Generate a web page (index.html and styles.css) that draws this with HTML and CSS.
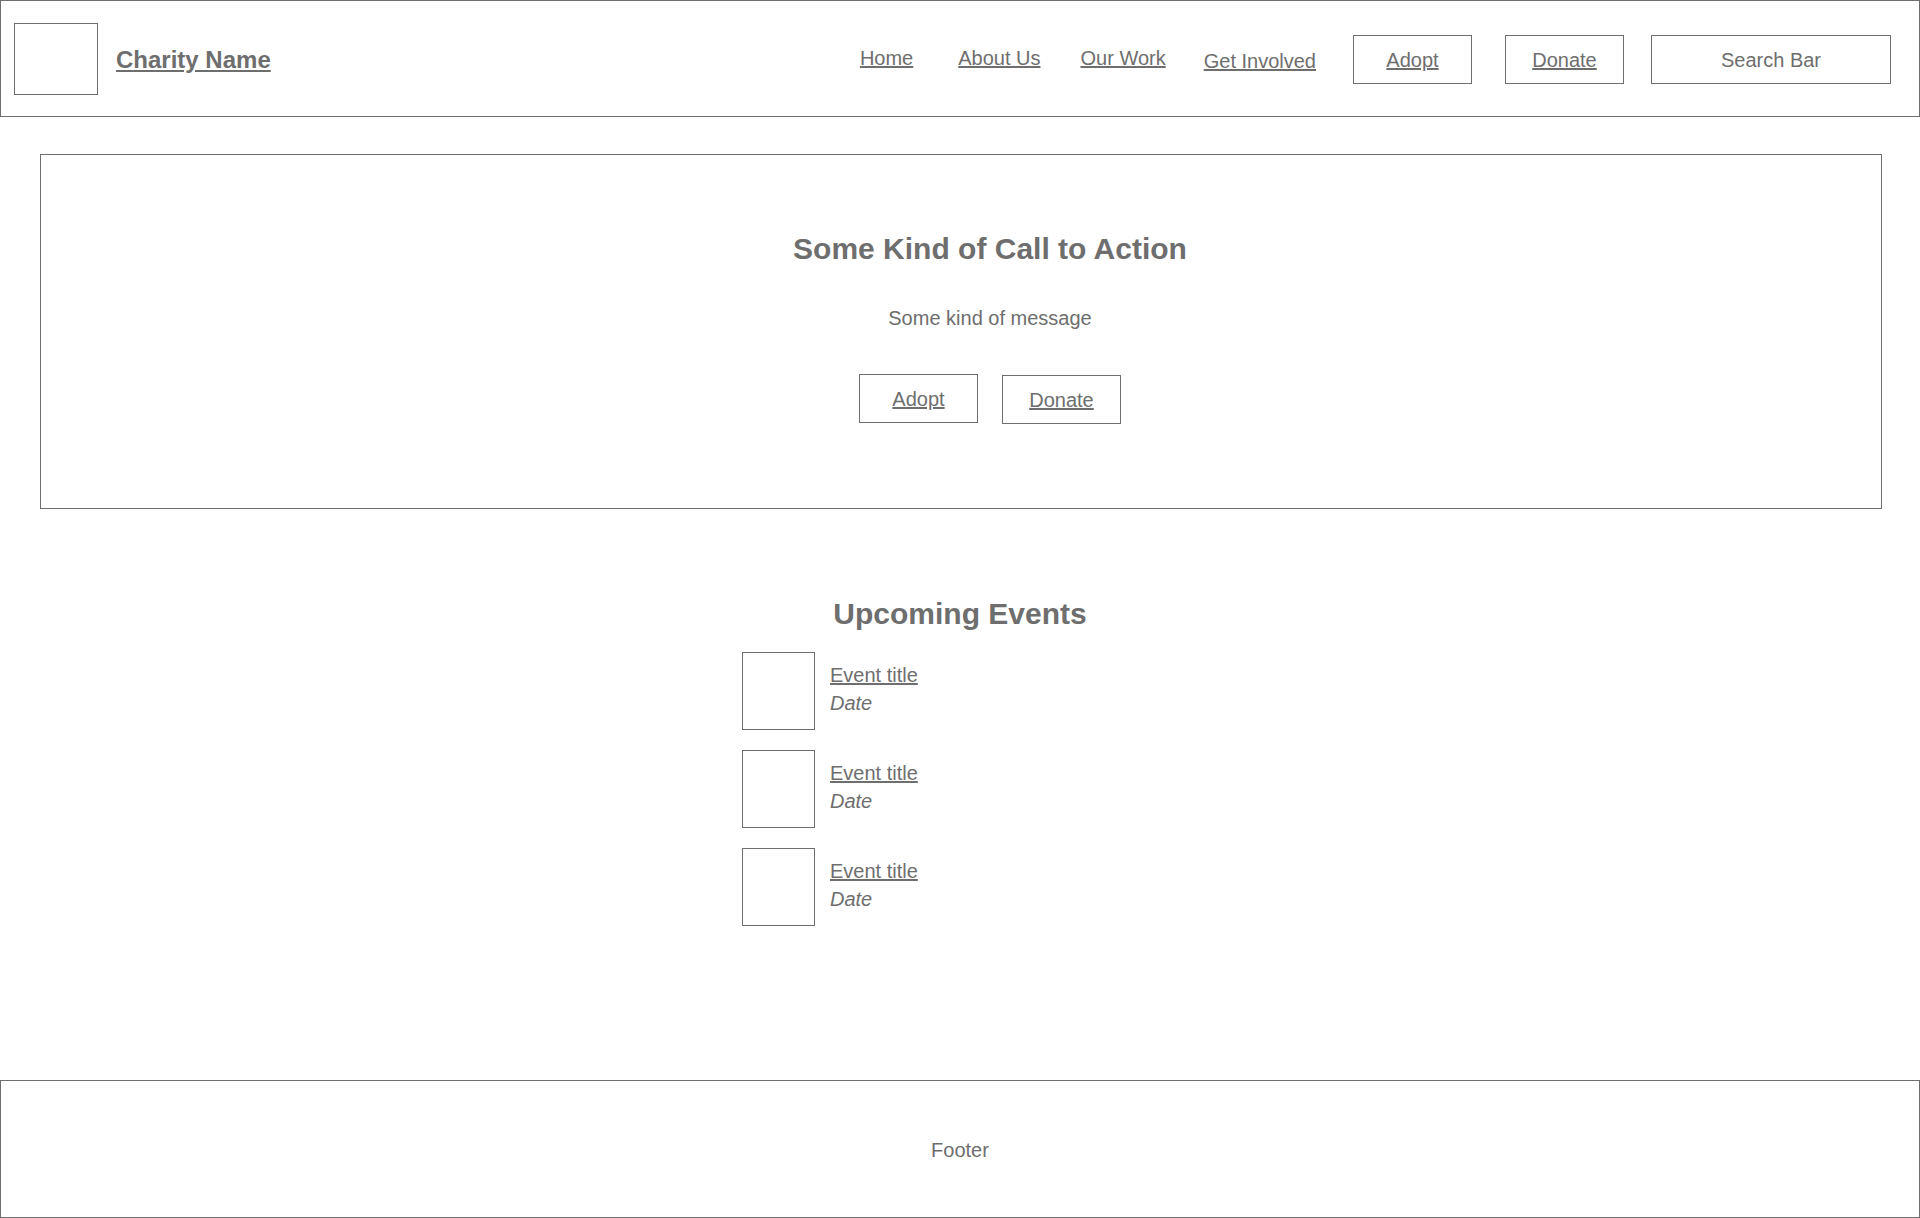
FILE: index.html
```html
<!DOCTYPE html>
<html lang="en">
<head>
<meta charset="utf-8">
<title>Charity Name</title>
<link rel="stylesheet" href="styles.css">
</head>
<body>
<header class="site-header">
  <div class="logo-box"></div>
  <a class="brand" href="#">Charity Name</a>
  <nav class="nav">
    <a class="nav-link nav-home" href="#">Home</a>
    <a class="nav-link nav-about" href="#">About Us</a>
    <a class="nav-link nav-work" href="#">Our Work</a>
    <a class="nav-link nav-involved" href="#">Get Involved</a>
    <a class="btn nav-adopt" href="#">Adopt</a>
    <a class="btn nav-donate" href="#">Donate</a>
    <div class="search-box">Search Bar</div>
  </nav>
</header>

<main class="main">
  <section class="hero">
    <h1 class="hero-title">Some Kind of Call to Action</h1>
    <p class="hero-message">Some kind of message</p>
    <div class="hero-actions">
      <a class="btn" href="#">Adopt</a>
      <a class="btn hero-donate" href="#">Donate</a>
    </div>
  </section>

  <section class="events">
    <h2 class="events-title">Upcoming Events</h2>
    <ul class="event-list">
      <li class="event">
        <div class="event-thumb"></div>
        <div class="event-info">
          <a class="event-name" href="#">Event title</a>
          <span class="event-date">Date</span>
        </div>
      </li>
      <li class="event">
        <div class="event-thumb"></div>
        <div class="event-info">
          <a class="event-name" href="#">Event title</a>
          <span class="event-date">Date</span>
        </div>
      </li>
      <li class="event">
        <div class="event-thumb"></div>
        <div class="event-info">
          <a class="event-name" href="#">Event title</a>
          <span class="event-date">Date</span>
        </div>
      </li>
    </ul>
  </section>
</main>

<footer class="site-footer">Footer</footer>
</body>
</html>
```

FILE: styles.css
```css
* {
  box-sizing: border-box;
}

html, body {
  margin: 0;
  padding: 0;
}

body {
  font-family: "Liberation Sans", Arial, Helvetica, sans-serif;
  color: #6e6e6e;
  background: #ffffff;
  min-height: 100vh;
  display: flex;
  flex-direction: column;
}

a {
  color: #6e6e6e;
  text-decoration: underline;
}

/* ---------- Header ---------- */
.site-header {
  height: 117px;
  border: 1px solid #6e6e6e;
  display: flex;
  align-items: center;
  padding: 0 28px 0 13px;
}

.logo-box {
  width: 84px;
  height: 72px;
  border: 1px solid #6e6e6e;
  margin-top: 1px;
  flex: none;
}

.brand {
  margin-left: 18px;
  font-size: 24px;
  font-weight: 700;
  line-height: 27px;
  margin-top: 1px;
}

.nav {
  margin-left: auto;
  display: flex;
  align-items: center;
}

.nav-link {
  font-size: 20px;
  line-height: 23px;
}

.nav-home {
  margin-top: -1px;
}

.nav-about {
  margin-left: 45px;
}

.nav-work {
  margin-left: 40px;
  margin-top: -1px;
}

.nav-involved {
  margin-left: 38px;
  margin-top: 5px;
}

.btn {
  display: flex;
  align-items: center;
  justify-content: center;
  width: 119px;
  height: 49px;
  border: 1px solid #6e6e6e;
  font-size: 20px;
  line-height: 23px;
  padding-top: 2px;
}

.nav-adopt {
  margin-left: 37px;
  margin-top: 1px;
}

.nav-donate {
  margin-left: 33px;
  margin-top: 1px;
}

.search-box {
  margin-left: 27px;
  margin-top: 1px;
  width: 240px;
  height: 49px;
  border: 1px solid #6e6e6e;
  display: flex;
  align-items: center;
  justify-content: center;
  font-size: 20px;
  line-height: 23px;
  padding-top: 2px;
}

/* ---------- Main ---------- */
.main {
  flex: 1;
}

.hero {
  height: 355px;
  margin: 37px 38px 0 40px;
  border: 1px solid #6e6e6e;
  padding: 77px 0 0 58px;
  display: flex;
  flex-direction: column;
  align-items: center;
}

.hero-title {
  margin: 0;
  font-size: 30px;
  line-height: 34px;
  font-weight: 700;
}

.hero-message {
  margin: 41px 0 0;
  font-size: 20px;
  line-height: 23px;
}

.hero-actions {
  margin-top: 44px;
  display: flex;
  align-items: flex-start;
  gap: 24px;
}

.hero-donate {
  margin-top: 1px;
}

/* ---------- Events ---------- */
.events {
  margin-top: 88px;
  display: flex;
  flex-direction: column;
  align-items: center;
}

.events-title {
  margin: 0;
  font-size: 30px;
  line-height: 34px;
  font-weight: 700;
}

.event-list {
  list-style: none;
  margin: 21px 0 0;
  padding: 0;
  width: 436px;
  display: flex;
  flex-direction: column;
  gap: 20px;
}

.event {
  display: flex;
  align-items: flex-start;
}

.event-thumb {
  width: 73px;
  height: 78px;
  border: 1px solid #6e6e6e;
  flex: none;
}

.event-info {
  margin-left: 15px;
  padding-top: 10px;
  display: flex;
  flex-direction: column;
  align-items: flex-start;
  font-size: 20px;
  line-height: 27px;
}

.event-date {
  font-style: italic;
  margin-top: 1px;
}

/* ---------- Footer ---------- */
.site-footer {
  height: 138px;
  border: 1px solid #6e6e6e;
  text-align: center;
  font-size: 20px;
  line-height: 23px;
  padding-top: 58px;
}
```
